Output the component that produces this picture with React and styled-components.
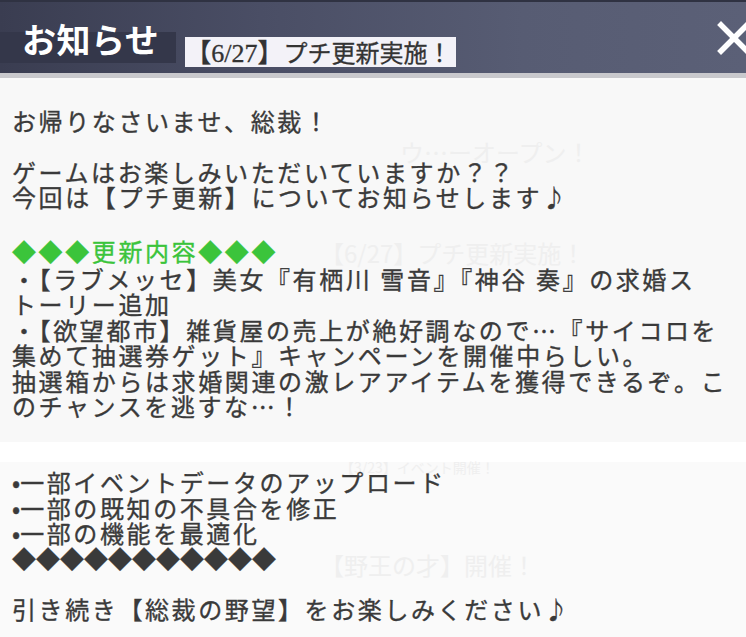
import React from 'react';
import styled, { createGlobalStyle } from 'styled-components';

const GlobalStyle = createGlobalStyle`
  html, body {
    margin: 0;
    padding: 0;
    background: #fafafa;
    overflow: hidden;
  }
`;

const Window = styled.div`
  width: 746px;
  height: 637px;
  display: flex;
  flex-direction: column;
  overflow: hidden;
  font-family: "Noto Sans CJK JP", "Noto Sans", sans-serif;
`;

const Header = styled.div`
  height: 71px;
  flex-shrink: 0;
  display: flex;
  align-items: flex-start;
  overflow: hidden;
  border-top: 2px solid #2f3242;
  border-bottom: 5px solid #c9c9cd;
  background: linear-gradient(90deg, #3a3d51 0%, #4a4e65 35%, #575c73 70%, #5b6077 100%);
`;

const TitleBand = styled.div`
  height: 31px;
  margin-top: 30px;
  padding: 0 17px 0 22px;
  display: flex;
  align-items: flex-end;
  background: #34374a;
`;

const Title = styled.h1`
  margin: 0 0 7px;
  font-size: 34px;
  line-height: 34px;
  font-weight: 700;
  color: #fff;
  letter-spacing: 0.5px;
`;

const Subtitle = styled.div`
  margin: 35px 0 0 9px;
  height: 30px;
  padding: 0 4px 0 0;
  background: #f3f2f8;
  color: #333;
  font-size: 24px;
  line-height: 30px;
  white-space: nowrap;
  -webkit-text-stroke: 0.3px #333;
`;

const DateTag = styled.span`
  font-family: "Liberation Serif", "Noto Sans CJK JP", serif;
  font-size: 26px;
`;

const CloseButton = styled.button`
  margin: 18px -6px 0 auto;
  padding: 0;
  border: none;
  background: none;
  width: 36px;
  height: 36px;
  cursor: pointer;
`;

const Body = styled.div`
  flex: 1;
  display: grid;
  background: #fafafa;
  & > * {
    grid-area: 1 / 1;
  }
`;

const GhostList = styled.div`
  display: flex;
  flex-direction: column;
  padding-top: 2px;
`;

const GhostRow = styled.div`
  height: ${p => p.h}px;
  flex-shrink: 0;
  display: flex;
  align-items: center;
  padding-left: ${p => p.x || 0}px;
  color: #efefef;
  font-size: ${p => p.size || 24}px;
  line-height: 1;
  white-space: nowrap;
  background: ${p => p.bg || 'transparent'};
`;

const Message = styled.div`
  padding: 30px 12px 0;
  color: #3a3a3a;
  font-size: 24px;
  line-height: 25.4px;
  letter-spacing: 2.6px;
  white-space: pre;
  -webkit-text-stroke: 0.35px #3a3a3a;
`;

const Line = styled.div`
  width: fit-content;
  min-height: 25.4px;
  letter-spacing: ${p => (p.tight ? '0' : 'inherit')};
`;

const Accent = styled(Line)`
  min-height: 31px;
  line-height: 31px;
  color: #3bc43b;
  -webkit-text-stroke: 0.35px #3bc43b;
`;

const Bullet = styled.span`
  letter-spacing: 0;
`;

const lines = [
  'お帰りなさいませ、総裁！',
  '',
  'ゲームはお楽しみいただいていますか？？',
  '今回は【プチ更新】についてお知らせします♪',
  '',
  { accent: true, text: '◆◆◆更新内容◆◆◆' },
  '・【ラブメッセ】美女『有栖川 雪音』『神谷 奏』の求婚ス',
  'トーリー追加',
  '・【欲望都市】雑貨屋の売上が絶好調なので…『サイコロを',
  '集めて抽選券ゲット』キャンペーンを開催中らしい。',
  '抽選箱からは求婚関連の激レアアイテムを獲得できるぞ。こ',
  'のチャンスを逃すな…！',
  '',
  '',
  { bullet: true, text: '一部イベントデータのアップロード' },
  { bullet: true, text: '一部の既知の不具合を修正' },
  { bullet: true, text: '一部の機能を最適化' },
  { tight: true, text: '◆◆◆◆◆◆◆◆◆◆◆' },
  '',
  '引き続き【総裁の野望】をお楽しみください♪',
];

const CloseIcon = () => (
  <svg width="36" height="36" viewBox="0 0 36 36">
    <path d="M5 5 L31 31 M31 5 L5 31" stroke="#fff" strokeWidth="5.5" strokeLinecap="square" />
  </svg>
);

export default function App() {
  return (
    <>
      <GlobalStyle />
      <Window>
        <Header>
          <TitleBand>
            <Title>お知らせ</Title>
          </TitleBand>
          <Subtitle>
            <DateTag>【6/27】</DateTag>プチ更新実施！
          </Subtitle>
          <CloseButton aria-label="閉じる">
            <CloseIcon />
          </CloseButton>
        </Header>
        <Body>
          <GhostList>
            <GhostRow h={20} bg="#f8f8f8" />
            <GhostRow h={103} x={400} bg="#f8f8f8">ウ…ーオープン！</GhostRow>
            <GhostRow h={100} x={320} bg="#f8f8f8">【6/27】プチ更新実施！</GhostRow>
            <GhostRow h={139} bg="#f8f8f8" />
            <GhostRow h={20} bg="#ffffff" />
            <GhostRow h={10} x={340} size={14}>【3/23】イベント開催！</GhostRow>
            <GhostRow h={186} x={320}>【野王の才】開催！</GhostRow>
          </GhostList>
          <Message>
            {lines.map((l, i) => {
              if (typeof l === 'string') return <Line key={i}>{l}</Line>;
              if (l.bullet)
                return (
                  <Line key={i}>
                    <Bullet>•</Bullet>
                    {l.text}
                  </Line>
                );
              if (l.tight) return <Line key={i} tight>{l.text}</Line>;
              return <Accent key={i}>{l.text}</Accent>;
            })}
          </Message>
        </Body>
      </Window>
    </>
  );
}
